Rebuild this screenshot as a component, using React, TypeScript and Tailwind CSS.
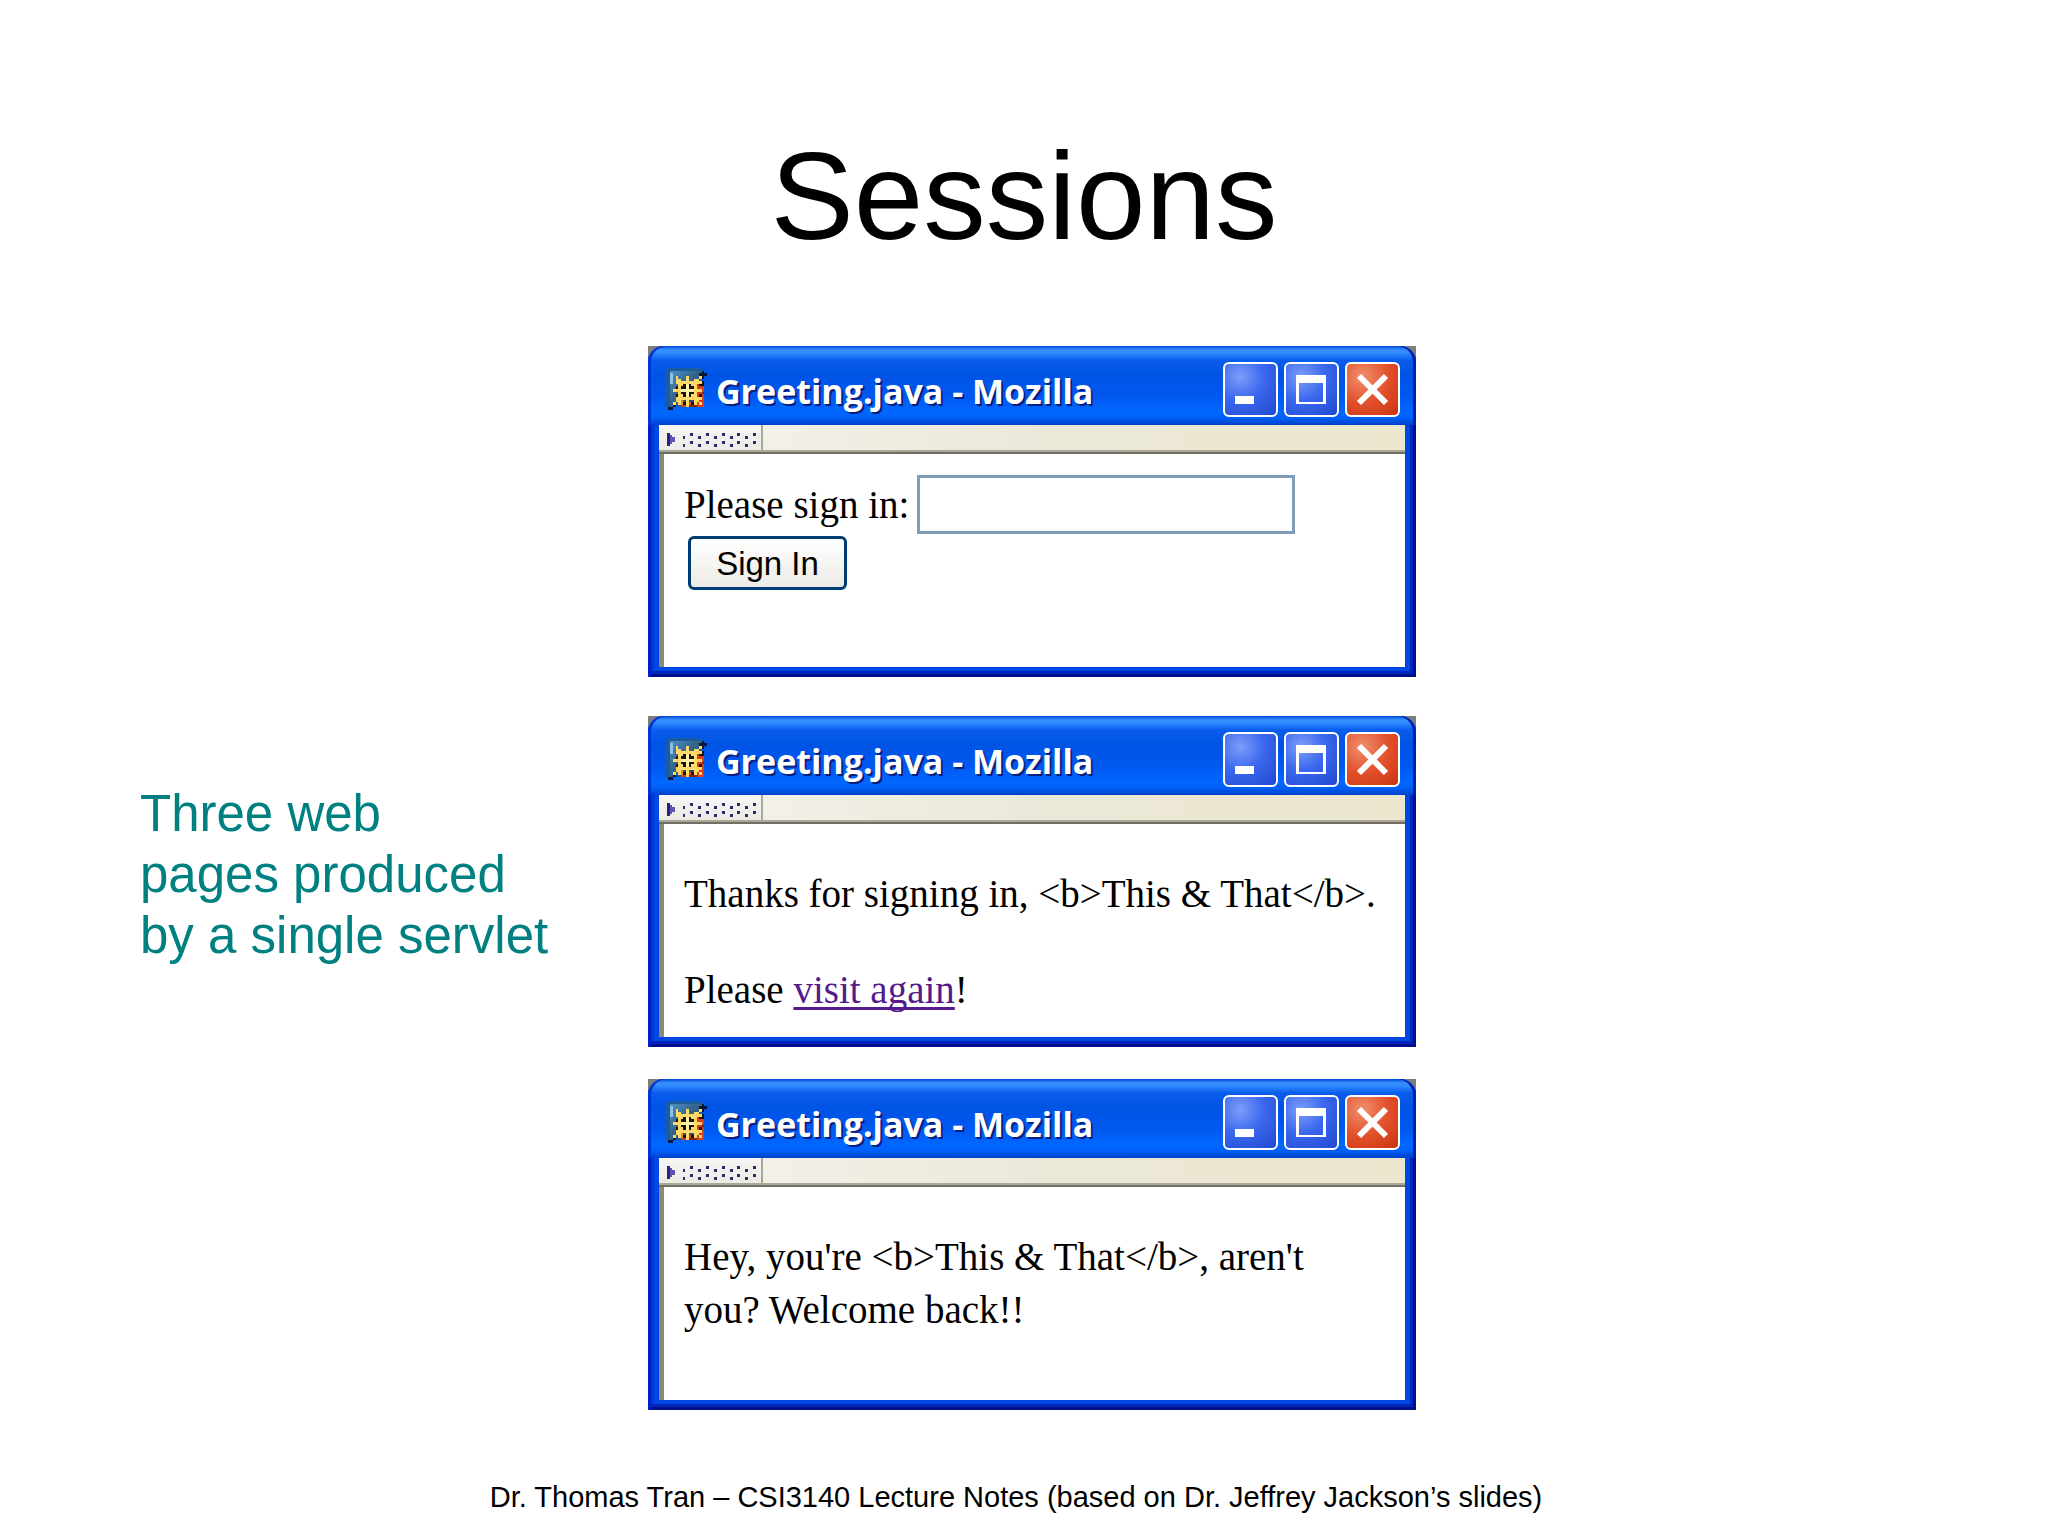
import type { ReactNode } from 'react'

const DOT_COLUMNS = [0, 1, 2, 3, 4, 5, 6, 7, 8, 9]

function MozillaIcon() {
  return (
    <svg viewBox="0 0 16 16" className="h-[42px] w-[42px] shrink-0" shapeRendering="crispEdges" aria-hidden="true">
      <defs>
        <linearGradient id="glass" x1="0" y1="0" x2="1" y2="1">
          <stop offset="0" stopColor="#4f92cc" />
          <stop offset="0.4" stopColor="#35688f" />
          <stop offset="1" stopColor="#1c3f66" />
        </linearGradient>
      </defs>
      <path fill="#1d5c9c" d="M1 0h13v1h1v1h-1v13H3v1H1v-1H0V1h1z" />
      <path fill="url(#glass)" d="M2 1h12v1h-1v12H4v1H2z" />
      <path fill="#8fbfe6" d="M2 2h1v4H2z" />
      <path fill="#0b1730" d="M14 1h1v1h1v1h-1v1h-1V3h-1V2h1zM1 15h2v-1h1v1h-1v1H1z" />
      <path fill="#d8401a" d="M12 6h3v9H6v-2h6z" />
      <path fill="#8c1f10" d="M14 9h1v1h-1zM9 14h3v1H9z" />
      <path fill="#f08a28" d="M5 12h2v2H5zM12 12h1v1h-1z" />
      <path fill="#18140c" d="M6 6h5v5H6zM4 7h1v1H4zM4 10h1v1H4zM13 5h2v2h-2zM13 10h1v1h-1zM7 13h1v1H7zM10 13h1v1h-1z" />
      <path
        fill="#ffd968"
        d="M5 4h1v10H5zM8 3h1v12H8zM11 4h1v10h-1zM4 5h10v1H4zM3 8h11v1H3zM4 11h10v1H4zM4 3h1v1H4zM4 4h1v1H4zM12 4h1v1h-1zM13 3h1v1h-1zM4 12h1v1H4zM3 13h1v1H3zM12 12h1v1h-1zM13 13h1v1h-1zM6 6h1v1H6zM10 6h1v1h-1zM6 10h1v1H6zM10 10h1v1h-1z"
      />
      <path fill="#fff0a8" d="M8 6h1v5H8zM6 8h5v1H6z" />
    </svg>
  )
}

function Grip() {
  return (
    <svg viewBox="0 0 104 25" className="h-[25px] w-[104px] shrink-0 border-r-2 border-[#aca899] bg-linear-to-b from-[#f7f6f5] to-[#ebeae4]" shapeRendering="crispEdges" aria-hidden="true">
      <path fill="#2b2470" d="M8 8h3v13H8z" />
      <path fill="#5b54b8" d="M11 10h2v2h3v5h-3v2h-2z" />
      {DOT_COLUMNS.map(i => (
        <g key={i} fill="#2b2b6e">
          <rect x={24 + i * 8} y={i % 2 ? 8 : 11} width="3" height="3" />
          <rect x={24 + i * 8} y={i % 2 ? 16 : 19} width="3" height="3" />
        </g>
      ))}
    </svg>
  )
}

const CAPTION = 'h-[55px] w-[55px] rounded-[6px] border-2 border-white'
const CAPTION_BLUE = 'bg-[radial-gradient(circle_at_30%_25%,#7d9dfb,#3b68ee_45%,#1f49d0)]'

function CaptionButtons() {
  return (
    <div className="flex gap-[6px]">
      <button aria-label="Minimize" className={`${CAPTION} ${CAPTION_BLUE}`}>
        <svg viewBox="0 0 51 51" shapeRendering="crispEdges"><path fill="#fff" d="M10 32h19v8H10z" /></svg>
      </button>
      <button aria-label="Maximize" className={`${CAPTION} ${CAPTION_BLUE}`}>
        <svg viewBox="0 0 51 51" shapeRendering="crispEdges"><path fill="#fff" fillRule="evenodd" d="M10 11h30v29H10zM13 19v19h24V19z" /></svg>
      </button>
      <button aria-label="Close" className={`${CAPTION} bg-[radial-gradient(circle_at_30%_25%,#f0906f,#e2502b_50%,#c9340f)]`}>
        <svg viewBox="0 0 51 51"><path stroke="#fff" strokeWidth="6" d="M12 12l27 27M39 12L12 39" /></svg>
      </button>
    </div>
  )
}

function BrowserWindow({ children }: { children: ReactNode }) {
  return (
    <section className="bg-[#7d7d7d]">
      <div className="rounded-t-[16px] bg-[#0048e4] px-[11px] pb-[10px] shadow-[inset_3px_0_#0020c8,inset_-3px_-3px_#000f8c,inset_-6px_-6px_#0024bc,inset_6px_0_#0036dc]">
        <header className="-mx-[11px] flex h-[79px] items-center rounded-t-[16px] bg-[linear-gradient(#0048d8,#3a92ff_4px,#2a84fc_8px,#0a5cec_14px,#0054e4_28px,#0058f0_50px,#0068ff_66px,#0060f8_72px,#0040c8)] pr-4 pl-[17px] pt-[7px] shadow-[inset_3px_0_#0034d8,inset_-3px_0_#0020b0]">
          <MozillaIcon />
          <h2 className="ml-[9px] flex-1 pt-1 font-['Open_Sans',sans-serif] text-[34px] leading-[40px] font-bold whitespace-nowrap text-white [text-shadow:2px_2px_#0a1f80]">
            Greeting.java - Mozilla
          </h2>
          <CaptionButtons />
        </header>
        <div className="border-b-2 border-[#716f64]">
          <div className="flex h-[27px] border-b-2 border-[#aca899] bg-[linear-gradient(to_right,#f4f3ee,#ece8d9_50%,#ebe6cc)]">
            <Grip />
          </div>
        </div>
        <div className="h-[213px] border-l-[5px] border-[#8c8a80] bg-white pl-5 font-['Liberation_Serif',serif] text-[39px] leading-[53px] text-black">
          {children}
        </div>
      </div>
    </section>
  )
}

export default function App() {
  return (
    <div className="min-h-screen bg-white font-['Liberation_Sans',sans-serif] text-black">
      <h1 className="pt-[133px] text-center text-[125px] leading-none">Sessions</h1>

      <main className="mt-[88px] grid grid-cols-[81fr_96fr_79fr] items-center">
        <p className="pb-2 pl-[140px] text-[51px] leading-[61px] text-[#008080]">
          Three web
          <br />
          pages produced
          <br />
          by a single servlet
        </p>

        <div className="flex flex-col">
          <BrowserWindow>
            <form className="pt-[21px]" onSubmit={e => e.preventDefault()}>
              <div className="flex items-center">
                <label htmlFor="signin" className="whitespace-nowrap">Please sign in:</label>
                <input id="signin" type="text" className="ml-2 h-[59px] w-[378px] border-[3px] border-[#7f9db9] bg-white px-2" />
              </div>
              <button
                type="submit"
                className="ml-1 mt-[2px] flex h-[54px] w-[159px] items-center justify-center rounded-[6px] border-[3px] border-[#003c74] bg-linear-to-b from-white to-[#ecebe6] pt-[2px] font-['Liberation_Sans',sans-serif] text-[33px] leading-[40px]"
              >
                Sign In
              </button>
            </form>
          </BrowserWindow>

          <div className="mt-[39px]">
            <BrowserWindow>
              <p className="pt-[43px] whitespace-nowrap">{'Thanks for signing in, <b>This & That</b>.'}</p>
              <p className="pt-[43px]">
                Please{' '}
                <a href="#again" className="text-[#551a8b] underline decoration-3 underline-offset-4 [text-decoration-skip-ink:none]">visit again</a>!
              </p>
            </BrowserWindow>
          </div>

          <div className="mt-8">
            <BrowserWindow>
              <p className="pt-[43px] whitespace-nowrap">
                {"Hey, you're <b>This & That</b>, aren't"}
                <br />
                you? Welcome back!!
              </p>
            </BrowserWindow>
          </div>
        </div>
      </main>

      <footer className="mt-[71px] pr-4 text-center text-[29px] leading-8">
        Dr. Thomas Tran – CSI3140 Lecture Notes (based on Dr. Jeffrey Jackson’s slides)
      </footer>
    </div>
  )
}
